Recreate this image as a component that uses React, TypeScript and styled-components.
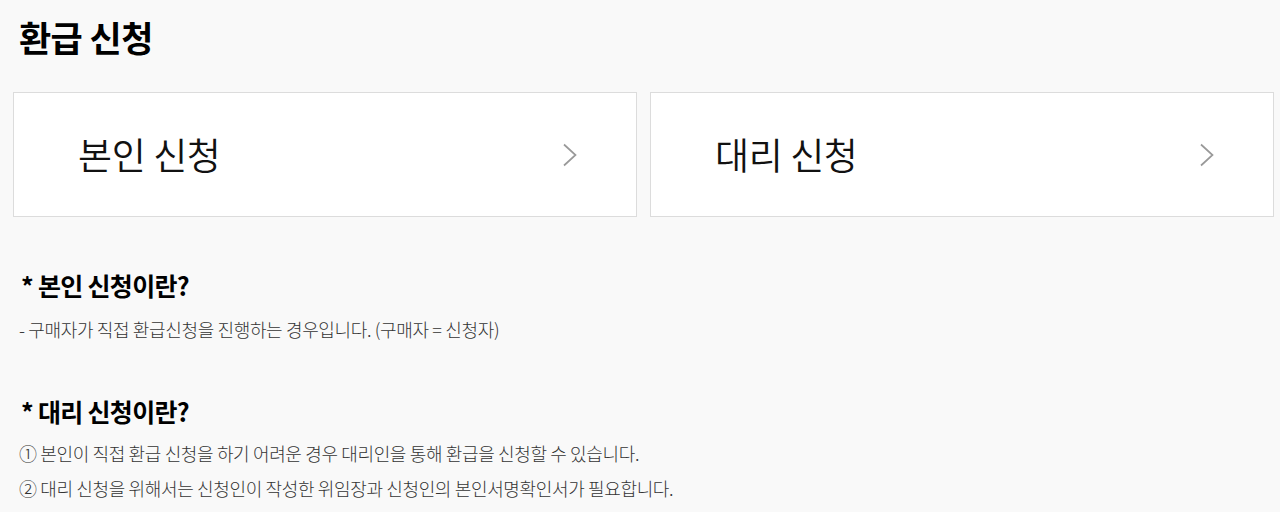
import styled, { createGlobalStyle } from 'styled-components';

const GlobalStyle = createGlobalStyle`
  html, body {
    margin: 0;
    padding: 0;
    background: #f9f9f9;
  }
  body {
    font-family: 'Noto Sans CJK KR', 'Noto Sans', sans-serif;
    color: #000;
  }
  * {
    box-sizing: border-box;
  }
`;

const Page = styled.main`
  width: 1280px;
  padding: 14px 6px 0 13px;
  display: flex;
  flex-direction: column;
`;

const Title = styled.h1`
  margin: 0 0 0 6px;
  font-size: 35px;
  font-weight: 700;
  line-height: 46px;
  letter-spacing: -0.6px;
`;

const CardRow = styled.div`
  margin-top: 32px;
  display: grid;
  grid-template-columns: 1fr 1fr;
  gap: 13px;
`;

const Card = styled.button`
  height: 125px;
  padding: 0 58px 0 64px;
  background: #fff;
  border: 1px solid #dcdcdc;
  display: flex;
  align-items: center;
  justify-content: space-between;
  cursor: pointer;
  font-family: inherit;
`;

const CardLabel = styled.span`
  font-size: 37px;
  font-weight: 350;
  line-height: 1;
  letter-spacing: -0.4px;
  color: #111;
`;

const Chevron = () => (
  <svg width="16" height="24" viewBox="0 0 16 24" fill="none">
    <path d="M2 1.5 L13.5 12 L2 22.5" stroke="#999" strokeWidth="1.7" />
  </svg>
);

const Section = styled.section<{ $top: number }>`
  margin: ${(p) => p.$top}px 0 0 8px;
  display: flex;
  flex-direction: column;
`;

const SectionTitle = styled.h2`
  margin: 0;
  font-size: 25px;
  font-weight: 700;
  line-height: 34px;
  letter-spacing: -0.7px;
`;

const Desc = styled.p<{ $gap?: number }>`
  margin: ${(p) => p.$gap ?? 14}px 0 0 -2px;
  font-size: 18px;
  font-weight: 300;
  line-height: 26px;
  letter-spacing: -0.35px;
  color: #333;
`;

export default function App() {
  return (
    <>
      <GlobalStyle />
      <Page>
        <Title>환급 신청</Title>
        <CardRow>
          <Card>
            <CardLabel>본인 신청</CardLabel>
            <Chevron />
          </Card>
          <Card>
            <CardLabel>대리 신청</CardLabel>
            <Chevron />
          </Card>
        </CardRow>

        <Section $top={51}>
          <SectionTitle>* 본인 신청이란?</SectionTitle>
          <Desc>- 구매자가 직접 환급신청을 진행하는 경우입니다. (구매자 = 신청자)</Desc>
        </Section>

        <Section $top={52}>
          <SectionTitle>* 대리 신청이란?</SectionTitle>
          <Desc $gap={12}>① 본인이 직접 환급 신청을 하기 어려운 경우 대리인을 통해 환급을 신청할 수 있습니다.</Desc>
          <Desc $gap={9}>② 대리 신청을 위해서는 신청인이 작성한 위임장과 신청인의 본인서명확인서가 필요합니다.</Desc>
        </Section>
      </Page>
    </>
  );
}
